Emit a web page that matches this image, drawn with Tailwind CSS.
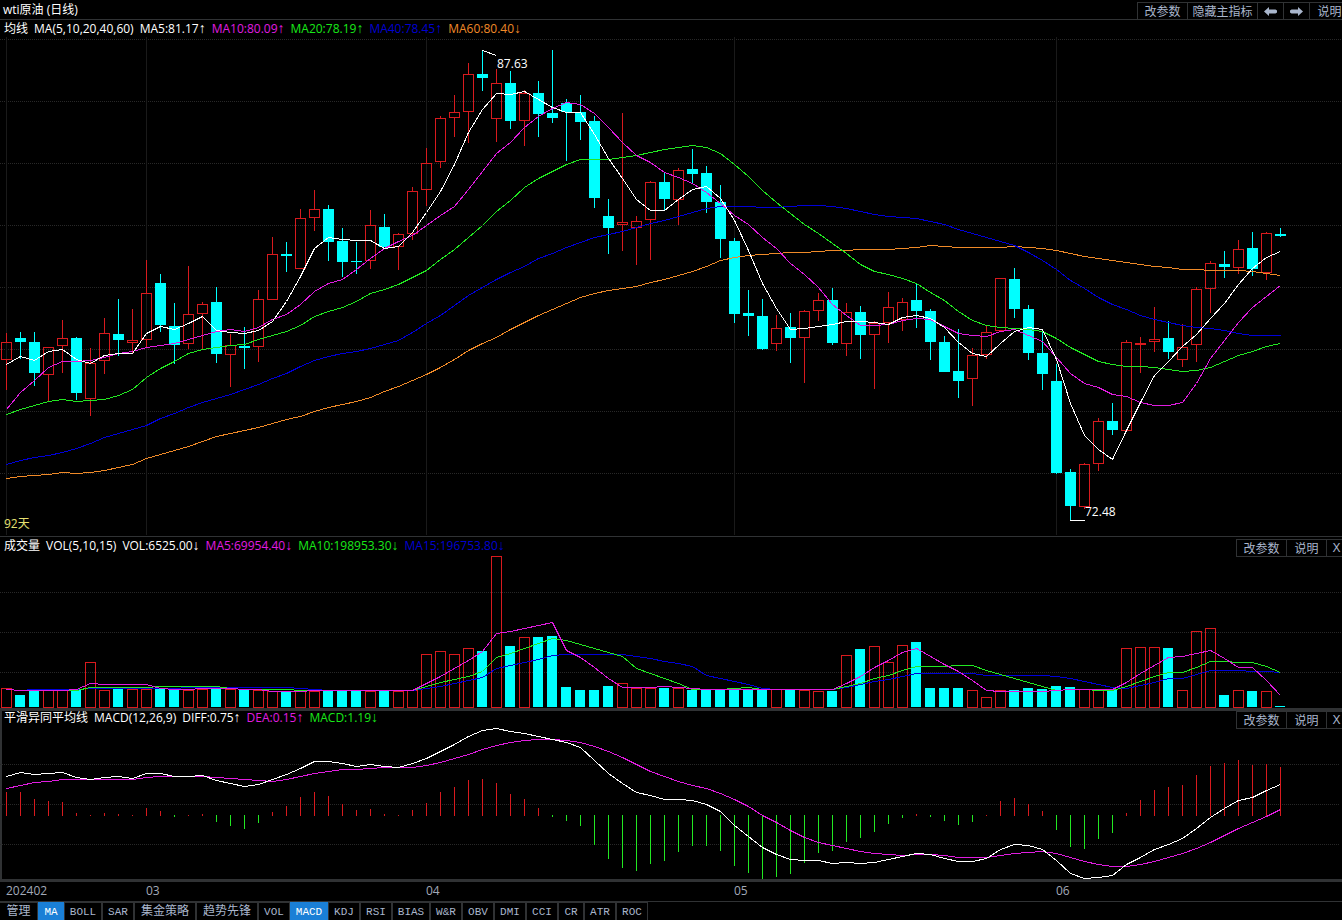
<!DOCTYPE html>
<html lang="zh-CN">
<head>
<meta charset="utf-8">
<title>wti原油 (日线)</title>
<script src="https://cdn.jsdelivr.net/npm/@tailwindcss/browser@4"></script>
</head>
<body class="bg-black text-white overflow-x-hidden font-['Open_Sans','Liberation_Sans','Noto_Sans_CJK_SC',sans-serif] text-[12px] leading-[16px]">
<main class="flex flex-col w-full overflow-hidden">

  <header class="flex justify-between h-5 border-b border-[#303234]">
    <h1 class="pl-[3px] pt-[2px] whitespace-nowrap">wti原油 (日线)</h1>
    <div class="flex mt-[2px] -mr-2 text-[#a9b6cc] border-l border-[#303234] font-['Noto_Sans_CJK_SC',sans-serif]">
      <button class="w-[50px] border-t border-r border-[#303234] whitespace-nowrap">改参数</button>
      <button class="w-[70px] border-t border-r border-[#303234] whitespace-nowrap">隐藏主指标</button>
      <button class="w-[26px] border-t border-r border-[#303234] flex items-center justify-center" aria-label="上一个">
        <svg width="13" height="9" viewBox="0 0 13 9" fill="currentColor"><path d="M0 4.500 5 0v2.500h6.500L13 3.500v2l-1.500 1H5V9z"/></svg>
      </button>
      <button class="w-[26px] border-t border-r border-[#303234] flex items-center justify-center" aria-label="下一个">
        <svg width="13" height="9" viewBox="0 0 13 9" fill="currentColor"><path d="M13 4.500 8 0v2.500H1.500L0 3.500v2l1.500 1H8V9z"/></svg>
      </button>
      <button class="w-[40px] border-t border-r border-[#303234] whitespace-nowrap">说明</button>
    </div>
  </header>

  <section class="border-b border-[#303234]" aria-label="均线">
    <div class="flex gap-1.5 h-4 pl-1 pt-px whitespace-nowrap">
      <span>均线</span><span>MA(5,10,20,40,60)</span><span>MA5:81.17<span class="text-[14px] leading-none">↑</span></span>
      <span class="text-[#e01ce0]">MA10:80.09<span class="text-[14px] leading-none">↑</span></span>
      <span class="text-[#18e818]">MA20:78.19<span class="text-[14px] leading-none">↑</span></span>
      <span class="text-[#0000d0]">MA40:78.45<span class="text-[14px] leading-none">↑</span></span>
      <span class="text-[#f08a28]">MA60:80.40<span class="text-[14px] leading-none">↓</span></span>
    </div>
    <svg id="price" class="block w-full h-[500px] overflow-visible" role="img" aria-label="K线图"></svg>
  </section>

  <section class="border-b-3 border-[#303234]" aria-label="成交量">
    <div class="flex justify-between h-5">
      <div class="flex gap-1.5 pl-1 pt-px whitespace-nowrap">
        <span>成交量</span><span>VOL(5,10,15)</span><span>VOL:6525.00<span class="text-[14px] leading-none">↓</span></span>
        <span class="text-[#e01ce0]">MA5:69954.40<span class="text-[14px] leading-none">↓</span></span>
        <span class="text-[#18e818]">MA10:198953.30<span class="text-[14px] leading-none">↓</span></span>
        <span class="text-[#0000d0]">MA15:196753.80<span class="text-[14px] leading-none">↓</span></span>
      </div>
      <div class="flex h-[18px] mt-[2px] -mr-1 text-[#a9b6cc] border border-r-0 border-[#303234] font-['Noto_Sans_CJK_SC',sans-serif]">
        <button class="w-[50px] border-r border-[#303234]">改参数</button>
        <button class="w-[40px] border-r border-[#303234]">说明</button>
        <button class="w-[19px] font-['Liberation_Sans',sans-serif]">X</button>
      </div>
    </div>
    <svg id="volume" class="block w-full h-[151px] overflow-visible" role="img" aria-label="成交量图"></svg>
  </section>

  <section class="border-b-3 border-l-2 border-[#303234]" aria-label="MACD">
    <div class="flex justify-between h-[18px]">
      <div class="flex gap-1.5 pl-[2px] -mt-px whitespace-nowrap">
        <span>平滑异同平均线</span><span>MACD(12,26,9)</span><span>DIFF:0.75<span class="text-[14px] leading-none">↑</span></span>
        <span class="text-[#e01ce0]">DEA:0.15<span class="text-[14px] leading-none">↑</span></span>
        <span class="text-[#18e818]">MACD:1.19<span class="text-[14px] leading-none">↓</span></span>
      </div>
      <div class="flex h-[18px] -mr-1 text-[#a9b6cc] border border-r-0 border-[#303234] font-['Noto_Sans_CJK_SC',sans-serif]">
        <button class="w-[50px] border-r border-[#303234]">改参数</button>
        <button class="w-[40px] border-r border-[#303234]">说明</button>
        <button class="w-[19px] font-['Liberation_Sans',sans-serif]">X</button>
      </div>
    </div>
    <svg id="macd" class="block w-full h-[150px] overflow-visible" role="img" aria-label="MACD图"></svg>
  </section>

  <div class="flex h-[19px] pl-1.5 pt-px text-[#a2a9b8]">
    <span class="w-[140px]">202402</span><span class="w-[280px]">03</span><span class="w-[308px]">04</span><span class="w-[322px]">05</span><span>06</span>
  </div>

  <nav class="border-t border-[#303234] text-[#a9b6cc] text-[11px] leading-[18px] font-['Liberation_Mono','Noto_Sans_CJK_SC',monospace] overflow-hidden h-[19px]">
    <div class="flex whitespace-nowrap">
      <button class="w-[38px] border border-l-0 border-[#303234] text-[12px]">管理</button>
      <button class="w-[26px] border border-[#1a7fd6] bg-[#1a7fd6] text-white">MA</button>
      <button class="w-[38px] border border-[#303234]">BOLL</button>
      <button class="w-[32px] border border-[#303234]">SAR</button>
      <button class="w-[62px] border border-[#303234] text-[12px]">集金策略</button>
      <button class="w-[62px] border border-[#303234] text-[12px]">趋势先锋</button>
      <button class="w-[32px] border border-[#303234]">VOL</button>
      <button class="w-[38px] border border-[#1a7fd6] bg-[#1a7fd6] text-white">MACD</button>
      <button class="w-[32px] border border-[#303234]">KDJ</button>
      <button class="w-[32px] border border-[#303234]">RSI</button>
      <button class="w-[38px] border border-[#303234]">BIAS</button>
      <button class="w-[32px] border border-[#303234]">W&amp;R</button>
      <button class="w-[32px] border border-[#303234]">OBV</button>
      <button class="w-[32px] border border-[#303234]">DMI</button>
      <button class="w-[32px] border border-[#303234]">CCI</button>
      <button class="w-[26px] border border-[#303234]">CR</button>
      <button class="w-[32px] border border-[#303234]">ATR</button>
      <button class="w-[32px] border border-[#303234]">ROC</button>
    </div>
  </nav>
</main>

<script>
const RED = '#d81a1e', CYAN = '#00ffff', GREEN = '#22e822', BLUE = '#0000d8', MAGENTA = '#e01ce0', ORANGE = '#f08a28', WHITE = '#ffffff';
const X = i => 6 + 14 * i;

// Candles: direction (r = up, c = down), high, body top, body bottom, low
const candles = `r333,342,359,390 c332,338,342,359 c332,342,373,386 r347,347,374,401 r320,338,345,373 c337,338,393,400 r348,363,398,416 r318,333,360,374 c299,334,340,356 r309,340,342,353
r260,293,339,347 c274,283,325,332 c303,326,345,364 r266,314,343,349 r302,304,313,349 c287,302,354,363 r334,345,354,387 c327,346,348,369 r290,299,346,362 r237,254,299,300
c242,254,256,272 r209,218,268,269 r190,209,217,231 c205,209,242,261 c228,241,262,277 c242,261,262,274 r210,225,260,269 c214,227,247,247 r233,234,246,270 r187,191,233,240
r148,163,189,206 r116,118,161,168 r95,112,117,137 r63,74,111,143 c50,74,78,91 r69,83,118,142 c71,83,121,129 r90,93,120,146 c81,93,114,137 c50,113,118,123
c99,103,112,161 c95,112,122,140 c116,121,198,208 c199,216,228,254 r113,222,224,251 r216,221,227,265 r181,182,219,260 c172,182,199,210 r168,170,199,225 c149,169,174,184
c166,173,202,213 c185,202,239,258 c238,241,314,323 c290,313,316,336 c299,316,349,350 r315,328,343,351 c313,327,338,363 r310,311,337,383 r293,300,310,321 c288,300,343,345
r303,312,343,356 c306,312,335,359 r321,323,334,389 r292,307,322,343 r298,302,319,331 c284,300,311,328 c309,311,342,360 c336,342,372,372 c329,371,381,398 r348,355,378,406
r325,332,354,359 r278,278,330,330 c268,279,309,318 c305,309,353,360 c330,353,374,390 c364,381,473,474 c469,472,506,521 r463,464,506,509 r418,421,463,471 c403,421,430,435
r340,342,430,431 r337,343,344,373 r307,339,341,352 c321,338,352,359 r324,347,359,367 r287,289,344,362 r261,263,288,313 c251,264,267,278 r240,249,267,274 c232,248,269,276
r232,233,272,280 c228,234,236,237`.split(/\s+/).map(s => [s[0], ...s.slice(1).split(',').map(Number)]);

const ma5 = [364,356,360,351,349,359,363,355,353,353,333,326,329,323,316,330,332,333,330,321,301,276,248,237,239,240,240,248,246,232,212,191,164,132,109,93,94,91,99,107,112,112,134,158,178,199,210,210,199,189,186,198,220,250,283,308,329,328,326,324,321,321,322,324,317,315,318,327,342,353,356,343,331,327,329,359,403,435,449,459,430,402,375,361,346,334,318,303,284,268,257,251];
const ma10 = [409,392,380,367,361,361,360,357,353,351,347,345,343,339,335,331,329,331,327,319,314,304,291,283,279,269,258,248,241,235,225,215,206,189,171,153,142,127,116,108,102,104,113,127,142,155,162,172,177,183,192,203,215,224,237,248,263,274,287,304,315,325,325,324,320,318,319,326,333,335,336,331,329,335,341,357,373,383,387,394,396,402,405,405,402,383,358,340,322,307,296,285];
const ma20 = [414,409,405,401,399,401,400,399,395,389,377,368,361,353,349,347,345,344,339,335,331,325,316,311,307,301,293,289,284,277,270,259,249,237,225,211,200,187,178,171,164,159,159,159,157,155,152,149,147,145,147,153,164,176,190,202,213,224,233,243,253,264,271,274,278,283,292,300,311,320,325,327,328,329,331,338,347,354,361,364,366,366,367,369,371,370,367,361,355,351,346,343];
const ma40 = [464,460,457,455,452,448,443,437,433,429,425,418,413,407,402,398,394,389,384,378,373,366,360,356,353,351,348,344,340,332,323,315,305,295,287,279,272,266,258,253,247,242,237,234,231,227,223,220,216,212,208,206,206,206,207,207,206,205,205,206,208,211,214,216,217,218,221,224,229,233,237,241,245,252,260,269,280,288,297,304,309,315,319,322,325,327,328,330,333,335,335,335];
const ma60 = [478,476,475,474,472,473,472,470,467,464,458,454,450,446,441,436,433,430,427,423,419,416,411,407,404,401,397,391,386,380,374,367,359,350,343,337,329,322,315,309,303,297,293,290,288,286,282,279,275,271,266,260,257,255,254,253,252,252,251,250,250,249,249,249,248,247,245,246,247,247,247,247,246,247,248,250,253,256,258,260,262,264,266,267,269,269,270,270,270,271,273,275];

const volTop = [688,695,689,690,690,689,662,690,689,689,689,688,688,690,689,689,689,690,690,691,692,691,691,691,691,691,691,691,691,690,654,651,654,648,651,556,646,637,637,636,687,690,690,686,683,688,688,688,688,690,689,689,689,689,690,689,689,690,691,691,655,649,646,662,645,642,688,688,688,690,697,690,690,688,689,686,687,689,690,690,648,647,647,648,690,631,628,695,690,691,691,706];
const vma5 = [689,690,690,690,690,689,683,684,684,684,684,688,689,689,688,688,688,689,689,691,691,691,690,690,690,690,690,690,690,690,683,676,668,660,651,633,631,628,625,622,650,657,667,678,687,687,687,686,687,688,689,689,689,689,689,689,689,689,689,689,683,676,667,660,652,648,656,664,671,680,690,691,691,691,691,690,689,689,689,689,682,673,665,657,656,653,650,658,667,667,680,695];
const vma10 = [689,690,690,690,690,690,687,687,687,687,687,686,686,686,686,686,688,689,689,689,689,690,690,690,690,690,690,690,690,690,686,682,679,676,671,657,653,648,643,638,640,644,648,652,656,668,673,678,683,689,689,689,688,687,689,689,689,689,689,689,686,683,678,675,670,666,666,666,665,665,670,674,678,682,686,690,689,689,690,690,686,681,676,672,672,667,661,661,662,662,666,672];
const vma15 = [689,690,689,689,689,689,688,688,688,688,688,688,688,687,687,687,687,687,687,687,687,688,689,690,690,690,690,690,690,690,688,686,683,680,677,668,665,662,659,655,654,654,654,654,654,656,658,661,663,666,675,678,681,684,688,689,689,689,689,689,687,684,681,679,676,673,673,673,673,673,675,675,675,675,675,676,678,681,684,687,688,685,682,678,678,674,670,670,670,671,671,672];

const diff = [776,772,774,773,772,777,779,777,776,778,773,773,776,776,775,780,783,786,784,779,774,768,761,761,763,766,764,766,767,763,758,751,744,736,730,728,731,733,736,739,742,747,760,773,783,792,795,799,799,800,804,811,825,836,847,854,859,860,860,863,862,863,862,859,856,853,854,858,861,861,858,849,844,845,849,860,873,878,877,875,864,857,849,844,838,828,817,808,800,797,790,784];
const dea = [788,785,782,781,779,779,779,779,779,779,777,776,776,776,776,777,778,779,780,781,779,776,773,771,769,769,768,767,767,767,765,762,758,754,749,745,742,740,739,739,740,742,746,751,757,764,771,776,781,785,788,793,799,806,815,822,830,837,842,845,848,851,853,854,855,854,854,855,857,857,857,855,853,852,851,853,857,861,864,866,866,864,861,857,853,848,842,835,828,822,816,809];
const hist = [792,792,799,801,802,813,815,813,814,815,808,811,817,815,814,822,826,829,823,812,806,797,792,796,804,810,809,814,815,810,803,792,787,780,779,783,794,799,808,817,821,826,845,859,868,871,864,861,852,846,846,851,866,873,879,877,874,863,853,851,842,838,832,824,818,814,817,821,825,822,815,801,798,804,811,830,847,849,839,833,813,800,790,787,785,775,766,763,760,765,764,767];

const line = (pts, color) => `<polyline fill="none" stroke="${color}" points="${pts.map((y, i) => (X(i) + .5) + ',' + (y + .5)).join(' ')}"/>`;
const hgrid = ys => ys.map(y => `<line x1="0" x2="100%" y1="${y + .5}" y2="${y + .5}" stroke="#282828" stroke-dasharray="1 1"/>`).join('');
const bar = (dir, x, top, bottom, w) => dir === 'r'
  ? `<rect x="${x - 4.5}" y="${top + .5}" width="10" height="${Math.max(bottom - top, 1)}" fill="none" stroke="${RED}"/>`
  : `<rect x="${x - 5}" y="${top}" width="${w}" height="${Math.max(bottom - top, 1)}" fill="${CYAN}"/>`;
const draw = (id, dx, dy, body) =>
  document.getElementById(id).innerHTML = `<g transform="translate(${-dx},${-dy})" shape-rendering="crispEdges">${body}</g>`;
const label = (x, y, text, color) => `<text x="${x}" y="${y}" fill="${color}">${text}</text>`;

let s = hgrid([39, 101, 163, 225, 287, 349, 411, 473]);
s += [6, 146, 426, 734, 1056].map(x => `<line x1="${x + .5}" x2="${x + .5}" y1="37" y2="535" stroke="#1a1a1a"/>`).join('');
candles.forEach(([d, h, t, b, l], i) => {
  const x = X(i), c = d === 'r' ? RED : CYAN;
  s += `<path d="M${x + .5} ${h}V${t}M${x + .5} ${b}V${l}" stroke="${c}"/>` + bar(d, x, t, b, 11);
});
s += line(ma60, ORANGE) + line(ma40, BLUE) + line(ma20, GREEN) + line(ma10, MAGENTA) + line(ma5, WHITE);
s += `<path d="M482.500 50.500L496.500 55.500M1070 520.500H1085" stroke="#fff"/>`;
s += label(497, 68, '87.63', WHITE) + label(1085, 516, '72.48', WHITE) + label(4, 528, '92天', '#e6e070');
draw('price', 0, 36, s);

s = hgrid([592, 632, 672]);
volTop.forEach((t, i) => { s += bar(candles[i][0], X(i), t, 707, 10); });
s += line(vma15, BLUE) + line(vma10, GREEN) + line(vma5, MAGENTA);
draw('volume', 0, 557, s);

s = hgrid([764, 804, 844]);
hist.forEach((y, i) => {
  const x = X(i) + .5;
  s += y < 816 ? `<line x1="${x}" x2="${x}" y1="${y}" y2="816" stroke="${RED}"/>` : `<line x1="${x}" x2="${x}" y1="815" y2="${y}" stroke="${GREEN}"/>`;
});
s += line(dea, MAGENTA) + line(diff, WHITE);
draw('macd', 2, 729, s);
</script>
</body>
</html>
